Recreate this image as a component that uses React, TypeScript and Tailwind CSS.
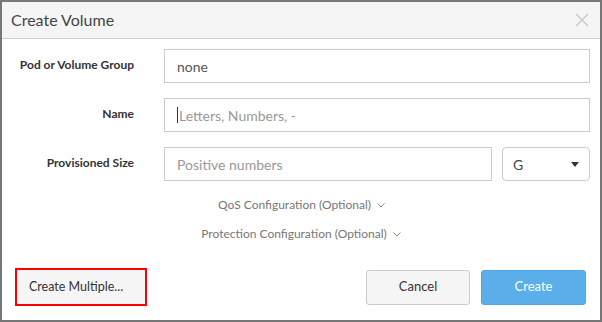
import React from "react";

function Row({ label, children }: { label: string; children: React.ReactNode }) {
  return (
    <div className="flex items-center">
      <div className="w-[132px] -mt-[3px] text-right text-[12px] font-bold text-[#333]">{label}</div>
      <div className="ml-[30px] flex flex-1 gap-[10px]">{children}</div>
    </div>
  );
}

export default function App() {
  return (
    <div
      className="w-[602px] h-[322px] border-2 border-[#777] bg-white flex flex-col"
      style={{ fontFamily: "Lato, 'Open Sans', sans-serif" }}
    >
      <div className="h-[37px] bg-[#f5f5f5] border-b border-[#cfcfcf] flex items-center justify-between pl-[9px] pr-[10px]">
        <span className="text-[16px] text-[#444]">Create Volume</span>
        <svg width="14" height="14" viewBox="0 0 14 14" className="mr-[1px]">
          <path d="M1 1L13 13M13 1L1 13" stroke="#c8c8c8" strokeWidth="1.4" />
        </svg>
      </div>

      <div className="flex flex-col gap-[15px] pt-[10px] pr-[10px]">
        <Row label="Pod or Volume Group">
          <div className="h-[34px] flex-1 border border-[#ccc] flex items-center px-[12px] text-[14px] text-[#555]">none</div>
        </Row>
        <Row label="Name">
          <div className="h-[34px] flex-1 border border-[#ccc] flex items-center px-[12px] text-[14px] text-[#999]">
            <span className="w-px h-[16px] bg-[#333] mr-[1px]" />
            Letters, Numbers, -
          </div>
        </Row>
        <Row label="Provisioned Size">
          <div className="h-[34px] flex-1 border border-[#ccc] flex items-center px-[12px] text-[14px] text-[#999]">Positive numbers</div>
          <div className="h-[34px] w-[88px] border border-[#ccc] rounded-[4px] flex items-center justify-between pl-[10px] pr-[10px] text-[14px] text-[#444]">
            <span>G</span>
            <svg width="8" height="5" viewBox="0 0 8 5"><path d="M0 0H8L4 5Z" fill="#333" /></svg>
          </div>
        </Row>
      </div>

      <div className="flex flex-col items-center gap-[11px] mt-[15px] text-[12px] text-[#777]">
        <div className="flex items-center gap-[6px] ml-[1px]">
          <span>QoS Configuration (Optional)</span>
          <svg width="8" height="5" viewBox="0 0 8 5"><path d="M0.5 0.5L4 4L7.5 0.5" stroke="#888" fill="none" /></svg>
        </div>
        <div className="flex items-center gap-[6px]">
          <span>Protection Configuration (Optional)</span>
          <svg width="8" height="5" viewBox="0 0 8 5"><path d="M0.5 0.5L4 4L7.5 0.5" stroke="#888" fill="none" /></svg>
        </div>
      </div>

      <div className="flex items-center justify-between mt-auto mb-[14px] pl-[13px] pr-[14px]">
        <div className="border-2 border-[#f00]">
          <button className="h-[34px] w-[128px] bg-[#f5f5f5] text-left pl-[12px] text-[12.5px] text-[#333]">Create Multiple...</button>
        </div>
        <div className="flex gap-[11px]">
          <button className="h-[35px] w-[104px] bg-[#f5f5f5] border border-[#ccc] rounded-[3px] text-[13px] text-[#333]">Cancel</button>
          <button className="h-[35px] w-[105px] bg-[#5aaeea] border border-[#52a6e2] rounded-[3px] text-[13px] text-white">Create</button>
        </div>
      </div>
    </div>
  );
}
